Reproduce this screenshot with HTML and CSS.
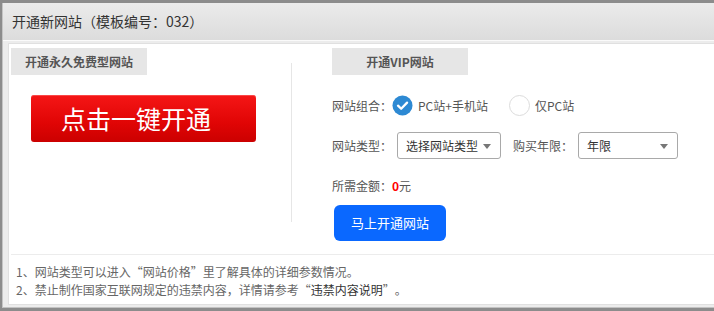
FILE: index.html
```html
<!DOCTYPE html>
<html lang="zh-CN">
<head>
<meta charset="utf-8">
<title>开通新网站</title>
<link rel="stylesheet" href="styles.css">
</head>
<body>
<div class="dialog">
  <div class="dlg-head">开通新网站<span class="punct">（</span>模板编号<span class="punct">：</span>032<span class="punct">）</span></div>
  <div class="dlg-body">
    <div class="panel">
      <div class="plans">
        <div class="plan free">
          <div class="tab">开通永久免费型网站</div>
          <a class="btn-red" href="#">点击一键开通</a>
        </div>
        <div class="divider"></div>
        <div class="plan vip">
          <div class="tab">开通VIP网站</div>
          <div class="row radios">
            <span class="label">网站组合<span class="punct">：</span></span>
            <span class="radio checked">
              <svg viewBox="0 0 22 22" width="22" height="22"><circle cx="11" cy="11" r="10.5" fill="#2d89d3"/><path d="M6.3 11.2 L9.6 14.4 L15.8 8" fill="none" stroke="#fff" stroke-width="2.4" stroke-linecap="round" stroke-linejoin="round"/></svg>
            </span>
            <span class="opt">PC站+手机站</span>
            <span class="radio empty"></span>
            <span class="opt">仅PC站</span>
          </div>
          <div class="row selects">
            <span class="label">网站类型<span class="punct">：</span></span>
            <div class="select type">选择网站类型<i class="caret"></i></div>
            <span class="label second">购买年限<span class="punct">：</span></span>
            <div class="select years">年限<i class="caret"></i></div>
          </div>
          <div class="row amount">
            <span class="label">所需金额<span class="punct">：</span></span><b class="price">0</b><span>元</span>
          </div>
          <a class="btn-blue" href="#">马上开通网站</a>
        </div>
      </div>
      <div class="notes">
        <p>1、网站类型可以进入“网站价格”里了解具体的详细参数情况。</p>
        <p>2、禁止制作国家互联网规定的违禁内容<span class="punct">，</span>详情请参考“<span class="link">违禁内容说明</span>”<span class="punct">。</span></p>
      </div>
    </div>
  </div>
</div>
</body>
</html>
```

FILE: styles.css
```css
* { box-sizing: border-box; }
html, body {
  margin: 0;
  padding: 0;
  height: 100%;
  overflow: hidden;
}
body {
  background: #8c8c8c;
  font-family: "Noto Sans CJK SC", "Noto Sans", sans-serif;
  font-size: 12px;
  color: #555;
}
.punct {
  display: inline-block;
  width: 1em;
  text-align: center;
}
.dialog {
  margin: 3px 0 0 2px;
  background: #f2f2f2;
  border-left: 1px solid #c4c4c4;
  border-bottom: 1px solid #c2c2c2;
}
.dlg-head {
  height: 38px;
  line-height: 37px;
  padding-left: 9px;
  font-size: 14px;
  color: #333;
  background: linear-gradient(#ebebeb, #dcdcdc);
  border-bottom: 1px solid #fafafa;
}
.dlg-body {
  padding: 2px 0 2px 5px;
  background: #ececec;
}
.panel {
  background: #fff;
  border: 1px solid #e0e0e0;
  border-right: none;
}
.plans {
  display: flex;
  padding-bottom: 13px;
}
.plan.free {
  width: 282px;
  padding: 4px 0 0 2px;
}
.tab {
  width: 136px;
  height: 27px;
  line-height: 27px;
  background: #e6e6e6;
  text-align: center;
  font-weight: bold;
  font-size: 12px;
  color: #555;
}
.btn-red {
  display: block;
  width: 225px;
  height: 47px;
  margin: 20px 0 0 20px;
  padding-left: 30px;
  line-height: 46px;
  font-size: 25px;
  color: #fff;
  text-decoration: none;
  border-radius: 3px;
  background: linear-gradient(#f51616, #e00505 60%, #cb0000);
  box-shadow: inset 0 1px 0 rgba(255,120,120,0.5);
}
.divider {
  width: 1px;
  height: 159px;
  margin-top: 19px;
  background: #e6e6e6;
}
.plan.vip {
  padding: 4px 0 0 40px;
}
.row {
  display: flex;
  align-items: center;
}
.label { color: #555; }
.radios {
  height: 22px;
  margin-top: 19px;
}
.radio {
  display: block;
  width: 21px;
  height: 21px;
}
.radio svg { display: block; width: 21px; height: 21px; }
.radio.empty {
  margin-left: 21px;
  border: 1px solid #dcdcdc;
  border-radius: 50%;
  background: #fff;
}
.opt {
  margin-left: 5px;
  color: #555;
}
.selects {
  height: 27px;
  margin-top: 16px;
}
.select {
  position: relative;
  height: 27px;
  line-height: 25px;
  padding-left: 8px;
  border: 1px solid #a9a9a9;
  border-radius: 3px;
  color: #333;
  background: #fff;
  margin-left: 5px;
}
.select.type { width: 104px; }
.select.years { width: 100px; }
.label.second { margin-left: 12px; }
.caret {
  position: absolute;
  right: 9px;
  top: 11px;
  width: 0;
  height: 0;
  border-left: 4px solid transparent;
  border-right: 4px solid transparent;
  border-top: 5px solid #777;
}
.amount {
  height: 18px;
  margin-top: 17px;
}
.price {
  color: #f00;
  font-weight: bold;
}
.btn-blue {
  display: block;
  width: 112px;
  height: 36px;
  margin: 11px 0 0 2px;
  line-height: 36px;
  text-align: center;
  font-size: 13px;
  color: #fff;
  text-decoration: none;
  background: #0a68ff;
  border-radius: 6px;
}
.notes {
  margin-left: 2px;
  border-top: 1px solid #ececec;
  padding: 8px 0 5px 5px;
}
.notes p {
  margin: 0;
  line-height: 18px;
  color: #666;
}
.notes .link { color: #333; }
```
